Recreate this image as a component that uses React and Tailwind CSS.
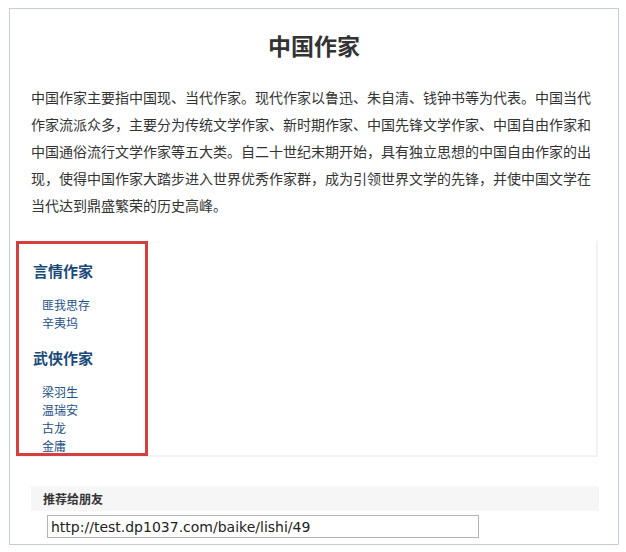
import React from "react";

const cjk = { fontFamily: '"Noto Sans CJK SC", "Noto Sans", sans-serif' };

const groups = [
  { title: "言情作家", names: ["匪我思存", "辛夷坞"] },
  { title: "武侠作家", names: ["梁羽生", "温瑞安", "古龙", "金庸"] },
];

const App = () => {
  return (
    <div className="w-[626px] h-[552px] bg-white pt-[8px] pl-[9px]" style={cjk}>
      <div className="w-[610px] h-[537px] border border-[#c3ced8]">
        {/* Title */}
        <h1 className="mt-[25px] text-center text-[23px] leading-[23px] font-bold text-[#333]">
          中国作家
        </h1>

        {/* Intro */}
        <p className="mt-[27px] ml-[21px] w-[562px] text-[14px] leading-[27px] text-[#333]">
          中国作家主要指中国现、当代作家。现代作家以鲁迅、朱自清、钱钟书等为代表。中国当代作家流派众多，主要分为传统文学作家、新时期作家、中国先锋文学作家、中国自由作家和中国通俗流行文学作家等五大类。自二十世纪末期开始，具有独立思想的中国自由作家的出现，使得中国作家大踏步进入世界优秀作家群，成为引领世界文学的先锋，并使中国文学在当代达到鼎盛繁荣的历史高峰。
        </p>

        {/* Category list */}
        <div className="mt-[22px] ml-[6px] w-[582px] h-[216px] border-r-2 border-b-2 border-[#f2f2f2]">
          <div className="w-[132px] h-[215px] border-[3px] border-[#d5403f] pl-[14px] pt-[17px]">
            {groups.map((g, i) => (
              <div key={g.title} className={i > 0 ? "mt-[16px]" : ""}>
                <h3 className="text-[15px] leading-[20px] font-bold text-[#1b4a78]">
                  {g.title}
                </h3>
                <ul className="mt-[15px] pl-[9px]">
                  {g.names.map((n) => (
                    <li key={n} className="text-[12px] leading-[18px] text-[#1d4f85]">
                      <a href="#">{n}</a>
                    </li>
                  ))}
                </ul>
              </div>
            ))}
          </div>
        </div>

        {/* Share */}
        <div className="mt-[29px] ml-[21px] w-[568px] h-[25px] bg-[#f6f6f6] pl-[12px] flex items-center">
          <span className="text-[12px] font-bold text-[#333]">推荐给朋友</span>
        </div>
        <input
          readOnly
          value="http://test.dp1037.com/baike/lishi/49"
          className="block mt-[4px] ml-[37px] w-[432px] h-[23px] border border-[#b4b4b4] px-[3px] text-[14px] text-[#222] outline-none"
          style={{ fontFamily: '"DejaVu Sans", Verdana, sans-serif' }}
        />
      </div>
    </div>
  );
};

export default App;
